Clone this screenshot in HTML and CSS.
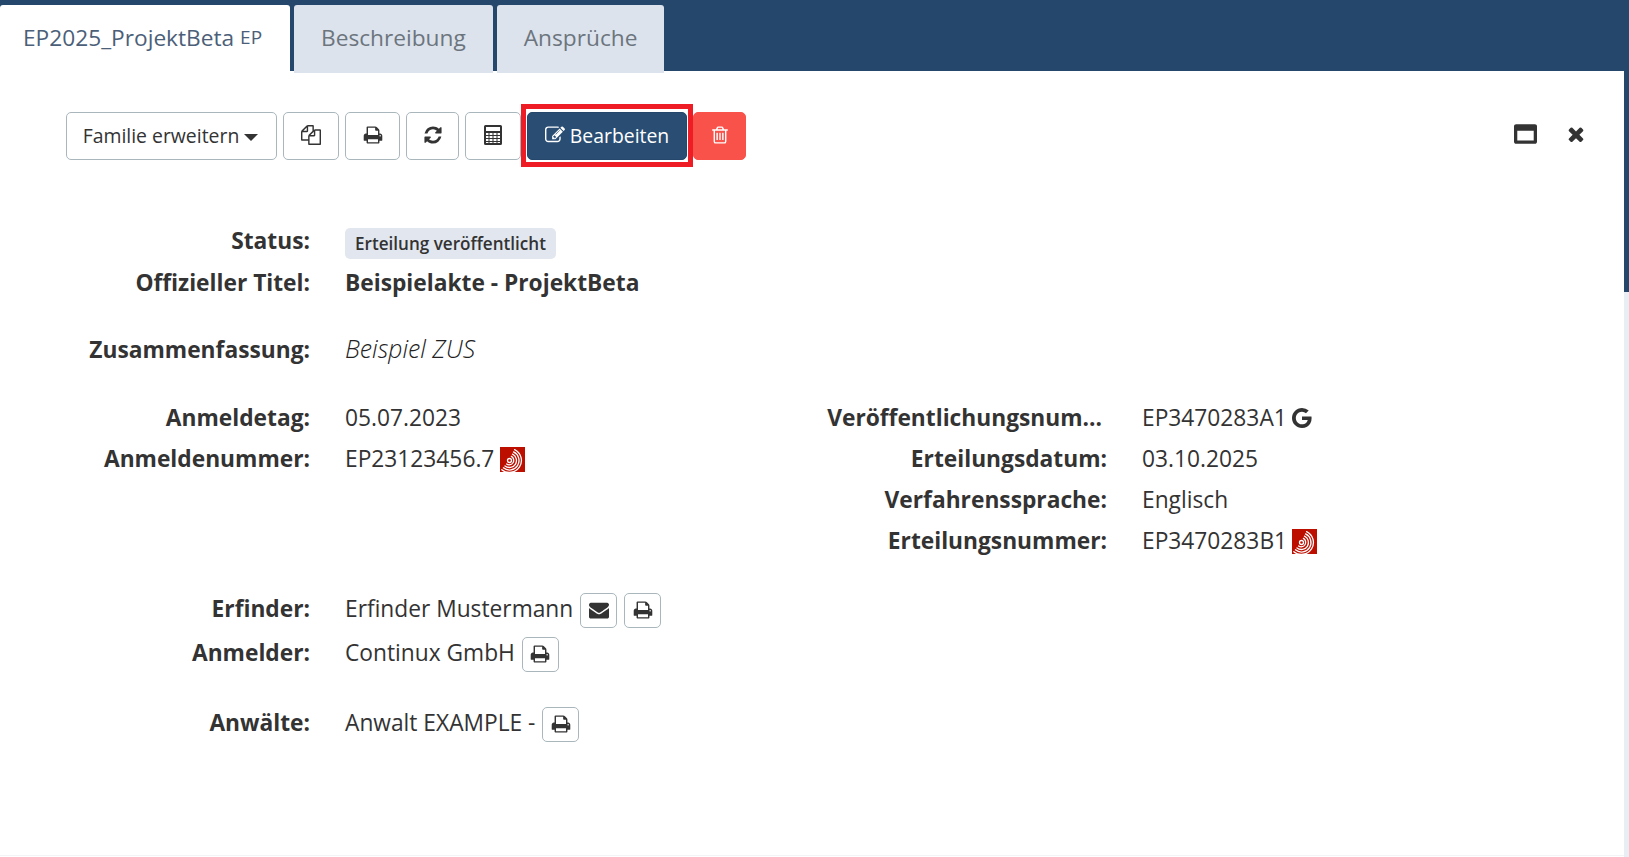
FILE: index.html
```html
<!DOCTYPE html>
<html>

<head>
    <title>EP2025_ProjektBeta</title>
    <link rel="stylesheet" href="styles.css">
</head>

<body>
    <svg class="icon-defs">
        <symbol id="i-files" viewBox="0 0 1792 1792"><path d="M1696 384q40 0 68 28t28 68v1216q0 40-28 68t-68 28h-960q-40 0-68-28t-28-68v-288h-544q-40 0-68-28t-28-68v-672q0-40 20-88t48-76l408-408q28-28 76-48t88-20h416q40 0 68 28t28 68v328q68-40 128-40h416zm-544 213l-299 299h299v-299zm-640-384l-299 299h299v-299zm196 647l316-316v-416h-384v416q0 40-28 68t-68 28h-416v640h512v-256q0-40 20-88t48-76zm956 804v-1152h-384v416q0 40-28 68t-68 28h-416v640h896z"/></symbol>
        <symbol id="i-print" viewBox="0 0 1792 1792"><path d="M448 1536h896v-256h-896v256zm0-640h896v-384h-160q-40 0-68-28t-28-68v-160h-640v640zm1152 64q0-26-19-45t-45-19-45 19-19 45 19 45 45 19 45-19 19-45zm128 0v416q0 13-9.500 22.500t-22.500 9.500h-224v160q0 40-28 68t-68 28h-960q-40 0-68-28t-28-68v-160h-224q-13 0-22.500-9.500t-9.500-22.500v-416q0-79 56.500-135.500t135.500-56.500h64v-544q0-40 28-68t68-28h672q40 0 88 20t76 48l152 152q28 28 48 76t20 88v256h64q79 0 135.500 56.500t56.500 135.500z"/></symbol>
        <symbol id="i-refresh" viewBox="0 0 1792 1792"><path d="M1639 1056q0 5-1 7-64 268-268 434.500t-478 166.500q-146 0-282.500-55t-243.500-157l-129 129q-19 19-45 19t-45-19-19-45v-448q0-26 19-45t45-19h448q26 0 45 19t19 45-19 45l-137 137q71 66 161 102t187 36q134 0 250-65t186-179q11-17 53-117 8-23 30-23h192q13 0 22.500 9.500t9.500 22.500zm25-800v448q0 26-19 45t-45 19h-448q-26 0-45-19t-19-45 19-45l138-138q-148-137-349-137-134 0-250 65t-186 179q-11 17-53 117-8 23-30 23h-199q-13 0-22.500-9.500t-9.500-22.500v-7q65-268 270-434.500t480-166.500q146 0 284 55.500t245 156.500l130-129q19-19 45-19t45 19 19 45z"/></symbol>
        <symbol id="i-calc" viewBox="0 0 18 20"><path fill-rule="evenodd" d="M1.500 0h15A1.500 1.500 0 0 1 18 1.500v17a1.500 1.500 0 0 1-1.500 1.500h-15A1.500 1.500 0 0 1 0 18.500v-17A1.500 1.500 0 0 1 1.500 0zM2 2v4h14V2zM2 8v2h2.500V8zm3.500 0v2h3V8zm4 0v2h3V8zm4 0v2H16V8zM2 11v2h2.500v-2zm3.500 0v2h3v-2zm4 0v2h3v-2zm4 0v2H16v-2zM2 14v2h2.500v-2zm3.500 0v2h3v-2zm4 0v2h3v-2zm4 0v2H16v-2zM2 17v1h2.500v-1zm3.500 0v1h3v-1zm4 0v1h3v-1zm4 0v1H16v-1z"/></symbol>
        <symbol id="i-edit" viewBox="0 0 1792 1792"><path d="M888 1184l116-116-152-152-116 116v56h96v96h56zm440-720q-16-16-33 1l-350 350q-17 17-1 33t33-1l350-350q17-17 1-33zm80 594v190q0 119-84.500 203.500t-203.500 84.500h-832q-119 0-203.500-84.500t-84.500-203.500v-832q0-119 84.500-203.500t203.500-84.500h832q63 0 117 25 15 7 18 23 3 17-9 29l-49 49q-14 14-32 8-23-6-45-6h-832q-66 0-113 47t-47 113v832q0 66 47 113t113 47h832q66 0 113-47t47-113v-126q0-13 9-22l64-64q15-15 35-7t20 29zm-96-738l288 288-672 672h-288v-288zm444 132l-92 92-288-288 92-92q28-28 68-28t68 28l152 152q28 28 28 68t-28 68z"/></symbol>
        <symbol id="i-trash" viewBox="0 0 1792 1792"><path d="M704 736v576q0 14-9 23t-23 9h-64q-14 0-23-9t-9-23v-576q0-14 9-23t23-9h64q14 0 23 9t9 23zm256 0v576q0 14-9 23t-23 9h-64q-14 0-23-9t-9-23v-576q0-14 9-23t23-9h64q14 0 23 9t9 23zm256 0v576q0 14-9 23t-23 9h-64q-14 0-23-9t-9-23v-576q0-14 9-23t23-9h64q14 0 23 9t9 23zm128 724v-948h-896v948q0 22 7 40.500t14.500 27 10.500 8.500h832q3 0 10.500-8.500t14.500-27 7-40.500zm-672-1076h448l-48-117q-7-9-17-11h-317q-10 2-17 11zm928 32v64q0 14-9 23t-23 9h-96v948q0 83-47 143.500t-113 60.500h-832q-66 0-113-58.500t-47-141.500v-952h-96q-14 0-23-9t-9-23v-64q0-14 9-23t23-9h309l70-167q15-37 54-63t79-26h320q40 0 79 26t54 63l70 167h309q14 0 23 9t9 23z"/></symbol>
        <symbol id="i-window" viewBox="0 128 1792 1536"><path d="M256 1408h1280v-768h-1280v768zm1536-1120v1216q0 66-47 113t-113 47h-1472q-66 0-113-47t-47-113v-1216q0-66 47-113t113-47h1472q66 0 113 47t47 113z"/></symbol>
        <symbol id="i-times" viewBox="250 250 1292 1292"><path d="M1490 1322q0 40-28 68l-136 136q-28 28-68 28t-68-28l-294-294-294 294q-28 28-68 28t-68-28l-136-136q-28-28-28-68t28-68l294-294-294-294q-28-28-28-68t28-68l136-136q28-28 68-28t68 28l294 294 294-294q28-28 68-28t68 28l136 136q28 28 28 68t-28 68l-294 294 294 294q28 28 28 68z"/></symbol>
        <symbol id="i-mail" viewBox="0 0 1792 1792"><path d="M1792 710v794q0 66-47 113t-113 47h-1472q-66 0-113-47t-47-113v-794q44 49 101 87 362 246 497 345 57 42 92.500 65.500t94.500 48 110 24.500h2q51 0 110-24.500t94.500-48 92.500-65.500q170-123 498-345 57-39 100-87zm0-294q0 79-49 151t-122 123q-376 261-468 325-10 7-42.500 30.500t-54 38-52 32.500-57.500 27-50 9h-2q-23 0-50-9t-57.500-27-52-32.500-54-38-42.500-30.500q-91-64-262-182.500t-205-142.500q-62-42-117-115.500t-55-136.500q0-78 41.500-130t118.500-52h1472q65 0 112.500 47t47.500 113z"/></symbol>
        <symbol id="i-google" viewBox="128 128 1536 1536"><path d="M896 786h725q12 67 12 128 0 217-91 387.500t-259.500 266.500-386.500 96q-157 0-299-60.500t-245-163.500-163.500-245-60.500-299 60.500-299 163.500-245 245-163.500 299-60.500q300 0 515 201l-209 201q-123-119-306-119-129 0-238.500 65t-173.500 176.500-64 243.500 64 243.500 173.500 176.500 238.500 65q87 0 160-24t120-60 82-82 51.500-87 22.500-78h-436v-264z"/></symbol>
        <symbol id="i-epo" viewBox="0 0 25 25">
            <rect width="25" height="25" fill="#bd0f00"/>
            <g fill="none" stroke="#fff" stroke-width="1.300" stroke-linecap="round">
                <path d="M14.600 2.600A12 12 0 1 1 1.800 22.700"/>
                <path d="M13.500 4.900A9.500 9.500 0 1 1 3.400 20.800"/>
                <path d="M12.500 7.200A7 7 0 1 1 5 18.900"/>
                <path d="M11.400 9.400A4.500 4.500 0 1 1 6.600 17"/>
                <circle cx="9.500" cy="13.500" r="2"/>
            </g>
        </symbol>
    </svg>

    <div id="tabbar">
        <a class="tab tab-active">EP2025_ProjektBeta <small>EP</small></a>
        <a class="tab">Beschreibung</a>
        <a class="tab">Ansprüche</a>
    </div>

    <div id="scrolltrack">
        <div id="scrollthumb"></div>
    </div>

    <div id="content">
        <div id="toolbar">
            <button class="btn btn-family">Familie erweitern <span class="caret"></span></button>
            <button class="btn btn-copy"><svg class="ico"><use href="#i-files"/></svg></button>
            <button class="btn btn-print"><svg class="ico"><use href="#i-print"/></svg></button>
            <button class="btn btn-refresh"><svg class="ico"><use href="#i-refresh"/></svg></button>
            <button class="btn btn-calc"><svg class="ico-calc"><use href="#i-calc"/></svg></button>
            <span class="highlight">
                <button class="btn btn-edit"><svg class="ico"><use href="#i-edit"/></svg> Bearbeiten</button>
            </span>
            <button class="btn btn-delete"><svg class="ico"><use href="#i-trash"/></svg></button>
            <span class="toolbar-right">
                <svg class="ico-window"><use href="#i-window"/></svg>
                <svg class="ico-times"><use href="#i-times"/></svg>
            </span>
        </div>

        <div class="row row-status">
            <div class="label">Status:</div>
            <div class="value"><span class="badge">Erteilung veröffentlicht</span></div>
        </div>
        <div class="row row-title">
            <div class="label">Offizieller Titel:</div>
            <div class="value"><b>Beispielakte - ProjektBeta</b></div>
        </div>
        <div class="row row-abstract">
            <div class="label">Zusammenfassung:</div>
            <div class="value"><i>Beispiel ZUS</i></div>
        </div>

        <div id="columns">
            <div class="col col-left">
                <div class="row">
                    <div class="label">Anmeldetag:</div>
                    <div class="value">05.07.2023</div>
                </div>
                <div class="row">
                    <div class="label">Anmeldenummer:</div>
                    <div class="value">EP23123456.7 <svg class="ico-epo"><use href="#i-epo"/></svg></div>
                </div>
            </div>
            <div class="col col-right">
                <div class="row">
                    <div class="label label-cut">Veröffentlichungsnum...</div>
                    <div class="value">EP3470283A1 <svg class="ico-google"><use href="#i-google"/></svg></div>
                </div>
                <div class="row">
                    <div class="label">Erteilungsdatum:</div>
                    <div class="value">03.10.2025</div>
                </div>
                <div class="row">
                    <div class="label">Verfahrenssprache:</div>
                    <div class="value">Englisch</div>
                </div>
                <div class="row">
                    <div class="label">Erteilungsnummer:</div>
                    <div class="value">EP3470283B1 <svg class="ico-epo"><use href="#i-epo"/></svg></div>
                </div>
            </div>
        </div>

        <div class="row row-person row-inventor">
            <div class="label">Erfinder:</div>
            <div class="value">Erfinder Mustermann
                <button class="btn btn-small"><svg class="ico-small"><use href="#i-mail"/></svg></button>
                <button class="btn btn-small"><svg class="ico-small"><use href="#i-print"/></svg></button>
            </div>
        </div>
        <div class="row row-person">
            <div class="label">Anmelder:</div>
            <div class="value">Continux GmbH
                <button class="btn btn-small"><svg class="ico-small"><use href="#i-print"/></svg></button>
            </div>
        </div>
        <div class="row row-person row-lawyer">
            <div class="label">Anwälte:</div>
            <div class="value">Anwalt EXAMPLE -
                <button class="btn btn-small"><svg class="ico-small"><use href="#i-print"/></svg></button>
            </div>
        </div>
    </div>
</body>

</html>
```

FILE: styles.css
```css
body {
    margin: 0;
    padding: 0;
    height: 857px;
    overflow: hidden;
    background-color: #fff;
    color: #333;
    font-family: "Open Sans", sans-serif;
    font-size: 22.75px;
}

.icon-defs {
    display: none;
}

#tabbar {
    display: flex;
    height: 71px;
    padding-top: 5px;
    box-sizing: border-box;
    background-color: #24476b;
}

.tab {
    display: flex;
    align-items: center;
    height: 68px;
    box-sizing: border-box;
    padding: 0 27px 4px;
    margin-right: 4px;
    border-radius: 3px 3px 0 0;
    background-color: #dce3ed;
    color: #6c757d;
    font-size: 22.7px;
}

.tab-active {
    width: 290px;
    padding: 0 23px 4px;
    background-color: #fff;
    color: #4b6078;
    white-space: pre;
}

.tab small {
    font-size: 19px;
}

#scrolltrack {
    position: absolute;
    top: 71px;
    right: 0;
    bottom: 0;
    width: 5px;
    background-color: #e9edf4;
}

#scrollthumb {
    height: 221px;
    background-color: #24476b;
}

#content {
    height: 785px;
    padding-top: 41px;
    box-sizing: border-box;
    border-bottom: 1px solid #f3f4f6;
}

#toolbar {
    display: flex;
    align-items: flex-start;
    height: 48px;
    padding-left: 66px;
    margin-bottom: 59px;
}

.btn {
    display: inline-flex;
    align-items: center;
    justify-content: center;
    box-sizing: border-box;
    height: 48px;
    padding: 0 0 2px;
    border: 1px solid #a9b7bd;
    border-radius: 5px;
    background-color: #fff;
    color: #333;
    font-family: "Open Sans", sans-serif;
    font-size: 19.4px;
    cursor: pointer;
}

.btn-family {
    width: 211px;
    padding-right: 2px;
    margin-right: 6px;
    white-space: pre;
}

.btn-copy {
    width: 56px;
    margin-right: 6px;
}

.btn-print {
    width: 55px;
    margin-right: 6px;
}

.btn-refresh {
    width: 53px;
    margin-right: 6px;
}

.btn-calc {
    width: 56px;
}

.highlight {
    display: flex;
    position: relative;
    z-index: 1;
    margin-top: -8px;
    padding: 3px 1px 2px;
    background-color: #fff;
    border: 5px solid #ee1c25;
}

.btn-edit {
    width: 160px;
    border-color: #24476b;
    background-color: #294d73;
    color: #fff;
    white-space: pre;
}

.btn-delete {
    width: 53px;
    border-color: #f9524a;
    background-color: #f9524a;
    color: #fff;
}

.ico {
    width: 20px;
    height: 20px;
    fill: currentColor;
}

.ico-calc {
    width: 18px;
    height: 20px;
    fill: #333;
}

.toolbar-right {
    display: flex;
    align-items: center;
    gap: 31px;
    height: 44px;
    margin-left: auto;
    margin-right: 45px;
}

.ico-window {
    width: 23px;
    height: 20px;
    fill: #333;
}

.ico-times {
    width: 16px;
    height: 16px;
    fill: #333;
}

.caret {
    display: inline-block;
    width: 0;
    height: 0;
    margin-top: 4px;
    border-left: 7px solid transparent;
    border-right: 7px solid transparent;
    border-top: 7px solid #333;
    vertical-align: middle;
}

.row {
    display: flex;
    align-items: center;
    height: 41px;
}

.label {
    width: 310px;
    text-align: right;
    font-weight: 700;
    white-space: nowrap;
}

.label-cut {
    box-sizing: border-box;
    padding-right: 5px;
}

.value {
    display: flex;
    align-items: center;
    gap: 6px;
    margin-left: 35px;
    white-space: nowrap;
}

.value i {
    margin-bottom: 2px;
    color: #222;
    font-size: 24.8px;
    font-weight: 300;
}

.badge {
    margin-top: 7px;
    padding: 4px 10px;
    border-radius: 5px;
    background-color: #e2e7ef;
    font-size: 17.1px;
    font-weight: 600;
}

.row-status {
    height: 42px;
}

.row-title {
    height: 42px;
}

.row-abstract {
    margin-top: 25px;
    height: 42px;
}

#columns {
    display: flex;
    margin-top: 27px;
}

.col-left {
    width: 797px;
}

.col-right .value {
    gap: 5px;
}

.ico-epo {
    width: 25px;
    height: 25px;
    margin-top: 2px;
}

.ico-google {
    width: 20px;
    height: 20px;
    fill: #333;
}

.row-person {
    height: 44px;
}

.row-person .value {
    gap: 7px;
}

.row-inventor {
    margin-top: 25px;
}

.row-lawyer {
    margin-top: 26px;
}

.btn-small {
    width: 37px;
    height: 35px;
    margin-top: 5px;
}

.ico-small {
    width: 20px;
    height: 20px;
    fill: #333;
}
```
